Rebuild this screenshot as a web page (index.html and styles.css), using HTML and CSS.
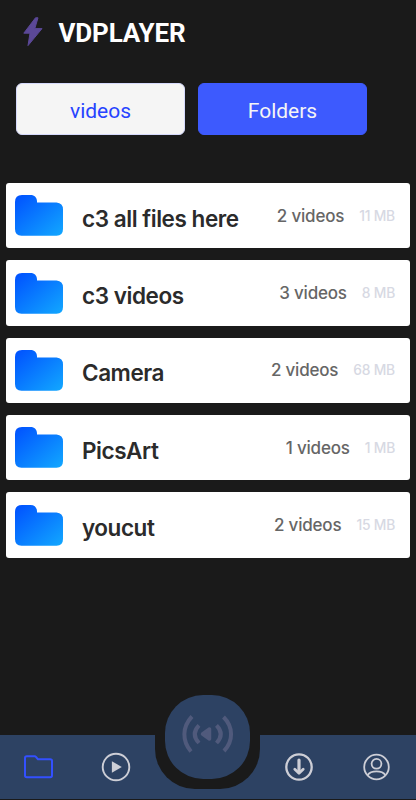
FILE: index.html
```html
<!DOCTYPE html>
<html lang="en">

<head>
    <meta charset="UTF-8">
    <meta name="viewport" content="width=device-width, initial-scale=1.0">
    <title>VDPLAYER</title>
    <link rel="stylesheet" href="styles.css">
</head>

<body>
    <!-- shared folder icon -->
    <svg class="defs" width="0" height="0">
        <defs>
            <linearGradient id="folder-fill" x1="0" y1="0" x2="1" y2="1">
                <stop offset="0" stop-color="#0050ff" />
                <stop offset="1" stop-color="#12a8ff" />
            </linearGradient>
            <symbol id="folder" viewBox="0 0 48 41">
                <path fill="url(#folder-fill)" d="M7 0H15.500C19.500 0 22 2.500 22 6.500V7.500H41.500Q48 8 48 14.500V34Q48 40.700 41.500 40.700H6.500Q0 40.700 0 34V7Q0 0 7 0Z" />
            </symbol>
        </defs>
    </svg>
    <div class="app">
        <header class="header">
            <svg class="bolt" width="22" height="30" viewBox="0 0 22 30">
                <path fill="#5b4897" stroke="#5b4897" stroke-linejoin="round" d="M13.500 .8L1.800 16.200H8L6 28.600L20 11.600H12.800L16 .8Z" />
            </svg>
            <h1>VDPLAYER</h1>
        </header>
        <div class="tabs">
            <button class="tab">videos</button>
            <button class="tab tab-active">Folders</button>
        </div>
        <ul class="folder-list">
            <li class="folder">
                <svg class="folder-icon"><use href="#folder" /></svg>
                <span class="name">c3 all files here</span>
                <span class="count">2 videos</span>
                <span class="size">11 MB</span>
            </li>
            <li class="folder">
                <svg class="folder-icon"><use href="#folder" /></svg>
                <span class="name">c3 videos</span>
                <span class="count">3 videos</span>
                <span class="size">8 MB</span>
            </li>
            <li class="folder">
                <svg class="folder-icon"><use href="#folder" /></svg>
                <span class="name">Camera</span>
                <span class="count">2 videos</span>
                <span class="size">68 MB</span>
            </li>
            <li class="folder">
                <svg class="folder-icon"><use href="#folder" /></svg>
                <span class="name">PicsArt</span>
                <span class="count">1 videos</span>
                <span class="size">1 MB</span>
            </li>
            <li class="folder">
                <svg class="folder-icon"><use href="#folder" /></svg>
                <span class="name">youcut</span>
                <span class="count">2 videos</span>
                <span class="size">15 MB</span>
            </li>
        </ul>
        <nav class="nav">
            <a class="nav-item">
                <svg width="30" height="30" viewBox="0 0 30 30" fill="none" stroke="#3350ff" stroke-width="2" stroke-linejoin="round">
                    <path d="M2.800 4.300H10.500Q11.500 4.300 12 5L14 7.300H26.200Q28 7.300 28 9.100V23.500Q28 25.300 26.200 25.300H2.800Q1 25.300 1 23.500V6.100Q1 4.300 2.800 4.300Z" />
                </svg>
            </a>
            <a class="nav-item">
                <svg width="30" height="30" viewBox="0 0 30 30">
                    <circle cx="15" cy="15" r="13.300" fill="none" stroke="#cdced6" stroke-width="1.900" />
                    <path fill="#cdced6" d="M10.900 9.200L20.800 15L10.900 20.800Z" />
                </svg>
            </a>
            <div class="notch">
                <div class="cast">
                    <svg width="54" height="40" viewBox="0 0 54 40" fill="none" stroke="#505a7c" stroke-width="4">
                        <path d="M11 2.500C1 13 1 27 10 37.500M18 11.300Q9.500 20 18 29M35.500 11.300Q44 20 35.500 29M42.500 3C52.500 13 52.500 27 43 37" />
                        <path d="M21.500 20L28.500 15V25Z" fill="#505a7c" stroke-width="3.500" stroke-linejoin="round" />
                    </svg>
                </div>
            </div>
            <a class="nav-item">
                <svg width="30" height="30" viewBox="0 0 30 30" fill="none" stroke="#cdced6">
                    <circle cx="15" cy="15" r="12.700" stroke-width="2.300" />
                    <path d="M15 8V20" stroke-width="3.200" stroke-linecap="round" />
                    <path d="M10.800 17.300L15 21.200L19.200 17.300" stroke-width="2.800" stroke-linecap="round" stroke-linejoin="round" />
                </svg>
            </a>
            <a class="nav-item">
                <svg width="30" height="30" viewBox="0 0 30 30" fill="none" stroke="#cdced6" stroke-width="1.800">
                    <circle cx="15.500" cy="15" r="12.300" />
                    <circle cx="15.500" cy="11.800" r="4.900" />
                    <path d="M6.500 23.200C10 18.200 21 18.200 24.500 23.200" />
                </svg>
            </a>
        </nav>
    </div>
</body>

</html>
```

FILE: styles.css
```css
:root {
    --bgColor: #1a1a1a;
    --navColor: #2d4263;
    --blueColor: #3d5afe;
}

* {
    padding: 0;
    margin: 0;
    box-sizing: border-box;
}

body {
    background-color: var(--bgColor);
    font-family: Roboto, sans-serif;
}

.defs {
    display: block;
}

.app {
    display: flex;
    flex-direction: column;
    height: 800px;
    padding-bottom: 1px;
    overflow: hidden;
}

/* header */
.header {
    display: flex;
    align-items: center;
    gap: 14.5px;
    height: 66px;
    padding-left: 22px;
}

.header .bolt {
    margin-bottom: 3px;
}

.header h1 {
    font-size: 26px;
    font-weight: 700;
    line-height: 30px;
    letter-spacing: -0.15px;
    color: #fff;
}

/* tabs */
.tabs {
    display: flex;
    gap: 13px;
    padding: 17px 16px 0;
}

.tab {
    width: 169px;
    height: 52px;
    padding-top: 3px;
    border: 1px solid #d5d9fb;
    border-radius: 6px;
    background-color: #f5f5f5;
    font-family: Roboto, sans-serif;
    font-size: 21px;
    color: #2743ff;
}

.tab-active {
    border-color: var(--blueColor);
    background-color: var(--blueColor);
    color: #f5f5f5;
}

/* folder list */
.folder-list {
    display: flex;
    flex-direction: column;
    gap: 12px;
    padding: 48px 6px 0;
    list-style: none;
}

.folder {
    display: flex;
    align-items: center;
    height: 65.35px;
    padding: 0 15px 0 9px;
    border-radius: 3px;
    background-color: #fff;
    font-family: Inter, sans-serif;
    white-space: nowrap;
}

.folder-icon {
    width: 48px;
    height: 41px;
}

.folder .name {
    flex: 1;
    margin-left: 19px;
    padding-top: 5px;
    font-size: 22.5px;
    font-weight: 600;
    letter-spacing: -0.45px;
    color: #2b2b2b;
}

.folder .count {
    margin-right: 15px;
    font-size: 17px;
    font-weight: 500;
    letter-spacing: -0.2px;
    color: #666;
}

.folder .size {
    font-size: 13.8px;
    font-weight: 500;
    letter-spacing: -0.2px;
    color: #d7d9e3;
}

/* bottom bar */
.nav {
    display: flex;
    align-items: flex-start;
    height: 64.5px;
    margin-top: auto;
    background-color: var(--navColor);
}

.nav-item {
    display: flex;
    justify-content: center;
    width: 77.5px;
    padding-top: 17px;
}

.notch {
    display: flex;
    justify-content: center;
    width: 105px;
    height: 54.5px;
    border-radius: 0 0 40px 40px;
    background-color: var(--bgColor);
}

/* round button, rises above the bar */
.cast {
    display: flex;
    justify-content: center;
    align-items: center;
    flex: none;
    width: 84.5px;
    height: 84.5px;
    margin-top: -40px;
    padding-bottom: 5px;
    border-radius: 38px;
    background-color: var(--navColor);
}
```
